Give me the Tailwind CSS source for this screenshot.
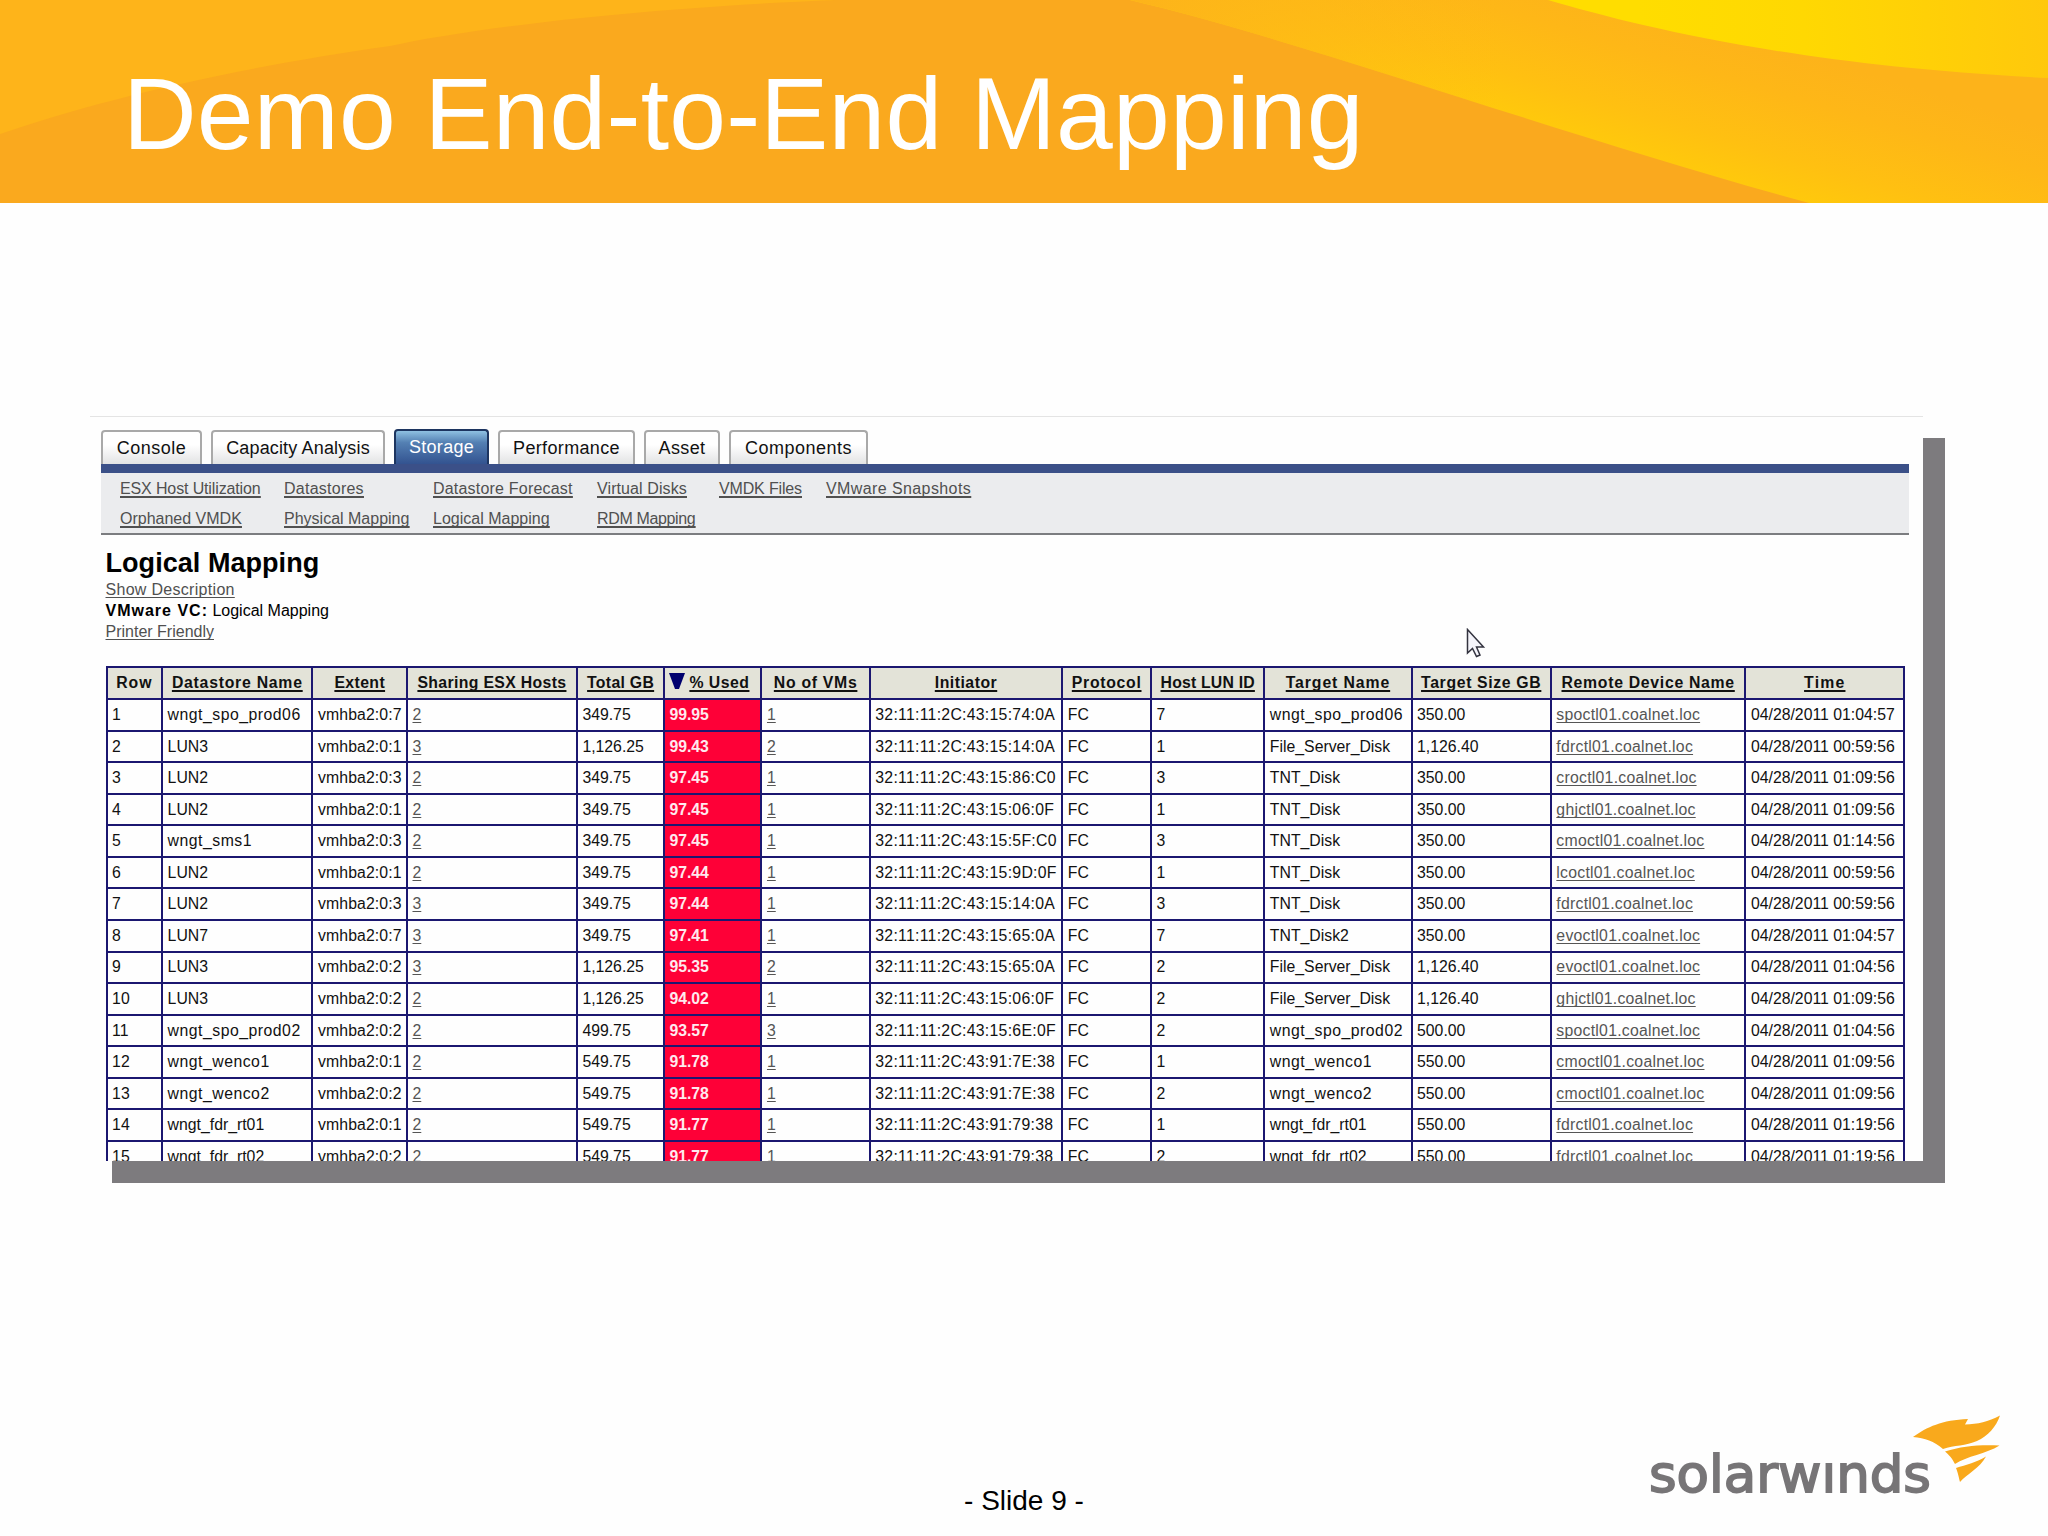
<!DOCTYPE html>
<html lang="en">
  <head>
    <meta charset="utf-8" />
    <meta name="viewport" content="width=device-width,initial-scale=1" />
    <title>Demo End-to-End Mapping</title>
    <script src="https://cdn.jsdelivr.net/npm/@tailwindcss/browser@4"></script>
  </head>

  <body class="w-[2048px] h-[1536px] overflow-hidden bg-[#fefefe] font-['Liberation_Sans',sans-serif] text-black">
    <!-- title banner -->
    <header class="relative h-[203px] overflow-hidden">
      <svg class="absolute inset-0" width="2048" height="203" viewBox="0 0 2048 203">
        <defs>
          <linearGradient id="band" x1="1500" y1="118" x2="1543" y2="-25" gradientUnits="userSpaceOnUse">
            <stop offset="0" stop-color="#ffca0b" />
            <stop offset="0.3" stop-color="#ffc011" />
            <stop offset="0.7" stop-color="#feb717" />
            <stop offset="1" stop-color="#fdb31a" />
          </linearGradient>
          <linearGradient id="fade" x1="1130" y1="0" x2="1500" y2="0" gradientUnits="userSpaceOnUse">
            <stop offset="0" stop-color="#fdb31b" />
            <stop offset="1" stop-color="#fdb31b" stop-opacity="0" />
          </linearGradient>
          <linearGradient id="sun" x1="1640" y1="30" x2="2048" y2="0" gradientUnits="userSpaceOnUse">
            <stop offset="0" stop-color="#ffdd00" />
            <stop offset="0.4" stop-color="#ffd802" />
            <stop offset="1" stop-color="#ffc80c" />
          </linearGradient>
        </defs>
        <rect width="2048" height="203" fill="#faa91e" />
        <path d="M0 0H836C640 8 480 27 390 46C220 70 90 103 0 134Z" fill="#feb41a" />
        <path d="M1130 0C1300 40 1560 135 1809 203H2048V0Z" fill="url(#band)" />
        <path d="M1130 0C1300 40 1560 135 1809 203H2048V0Z" fill="url(#fade)" />
        <path d="M1548 0C1640 27 1800 66 2048 78V0Z" fill="url(#sun)" />
      </svg>
      <h1 class="relative pl-[123px] pt-[56px] text-[102px] leading-[117px] tracking-[0.2px] text-white whitespace-nowrap">Demo End-to-End Mapping</h1>
    </header>

    <!-- report window -->
    <main class="relative ml-[90px] mt-[213px] w-[1833px] h-[745px] shadow-[22px_22px_0_#7d7b7e]">
      <div class="h-full overflow-hidden bg-[#fefefe] border-t border-[#e4e4e4] pl-[11px]">
        <nav class="flex items-end h-[47px] text-[18px] text-[#111]">
          <div class="flex items-center justify-center w-[101px] h-[34px] mr-[9px] border-2 border-b-0 border-[#a9a9a9] rounded-t-sm bg-linear-to-b from-white from-40% to-[#e2e3e4] tracking-[0.5px]">Console</div>
          <div class="flex items-center justify-center w-[174px] h-[34px] mr-[9px] border-2 border-b-0 border-[#a9a9a9] rounded-t-sm bg-linear-to-b from-white from-40% to-[#e2e3e4] tracking-[0.15px]">Capacity Analysis</div>
          <div class="flex items-center justify-center w-[95px] h-[35px] mr-[9px] border-2 border-b-0 border-[#1d3560] rounded-t-sm bg-linear-to-b from-[#8fc1e2] via-[#5480b3] via-35% to-[#335390] text-white tracking-[0.3px]">Storage</div>
          <div class="flex items-center justify-center w-[137px] h-[34px] mr-[9px] border-2 border-b-0 border-[#a9a9a9] rounded-t-sm bg-linear-to-b from-white from-40% to-[#e2e3e4] tracking-[0.35px]">Performance</div>
          <div class="flex items-center justify-center w-[76px] h-[34px] mr-[9px] border-2 border-b-0 border-[#a9a9a9] rounded-t-sm bg-linear-to-b from-white from-40% to-[#e2e3e4] tracking-[0.4px]">Asset</div>
          <div class="flex items-center justify-center w-[139px] h-[34px] border-2 border-b-0 border-[#a9a9a9] rounded-t-sm bg-linear-to-b from-white from-40% to-[#e2e3e4] tracking-[0.5px]">Components</div>
        </nav>

        <div class="w-[1808px] h-[71px] border-t-9 border-t-[#3b5088] border-b-2 border-b-[#7b7d80] bg-[#ebecee] pl-[19px] pt-[1px]">
          <div class="grid grid-cols-[164px_149px_164px_122px_107px_200px] auto-rows-[30px] items-center text-[16px] text-[#505050] underline underline-offset-2 decoration-2 [text-decoration-skip-ink:none]">
            <a class="tracking-[-0.13px]">ESX Host Utilization</a><a class="tracking-[0.25px]">Datastores</a><a class="tracking-[0.2px]">Datastore Forecast</a><a class="tracking-[0.1px]">Virtual Disks</a><a class="tracking-[-0.15px]">VMDK Files</a><a class="tracking-[0.4px]">VMware Snapshots</a>
            <a>Orphaned VMDK</a><a>Physical Mapping</a><a>Logical Mapping</a><a class="tracking-[-0.35px]">RDM Mapping</a>
          </div>
        </div>

        <div class="pl-[4.5px] pt-[13px] text-[16px] leading-[21px]">
          <h2 class="text-[27px] leading-[31px] tracking-[0.05px] font-bold">Logical Mapping</h2>
          <p><a class="text-[#505050] tracking-[0.3px] underline underline-offset-2 [text-decoration-skip-ink:none]">Show Description</a></p>
          <p><b class="tracking-[1px]">VMware VC:</b> Logical Mapping</p>
          <p><a class="text-[#505050] underline underline-offset-2 [text-decoration-skip-ink:none]">Printer Friendly</a></p>
        </div>

        <div id="report" class="grid grid-cols-[53.5px_148.4px_92.5px_167.9px_85.5px_95.1px_106.3px_190.5px_86.8px_111.3px_145.2px_137.3px_192.6px_156.7px] grid-rows-[30px] auto-rows-[29.57px] gap-[2px] p-[2px] w-[1799.6px] ml-[4.6px] mt-[24px] bg-[#1b1770] text-[15.8px] whitespace-nowrap"></div>
      </div>

      <!-- mouse pointer -->
      <svg class="absolute left-[1376px] top-[212px]" width="20" height="31" viewBox="0 0 20 31">
        <path d="M1.500 1.500V25L6.500 20.500L10.500 28.500L14 27L10.500 19H17.500Z" fill="#f4f4fa" stroke="#33333f" stroke-width="1.500" />
      </svg>
    </main>

    <footer class="relative h-[375px]">
      <p class="pt-[324px] text-center text-[28px] leading-[32px]">- Slide 9 -</p>
      <!-- solarwinds logo -->
      <svg class="absolute left-[1620px] top-[229px]" width="428" height="146" viewBox="0 0 428 146">
        <text x="29" y="102" textLength="282" lengthAdjust="spacingAndGlyphs" font-family="DejaVu Sans" font-size="52" fill="#777577" stroke="#777577" stroke-width="1.800">solarwınds</text>
        <g fill="#f9a91c">
          <path d="M293 47C307 37 322 30 348 29L345 34.500C358 34 368 32 380 25.500C376 37 368 46 357 51C346 56 334 55 323 59C314 51 305 48 293 47Z" />
          <path d="M325 61.500C342 56 360 54.500 379.500 55.500C366 64 347 66 335 74C332 68 329 65 325 61.500Z" />
          <path d="M336 78C346 75 357 72 366 66.500C360 78 347 84 340 92C338.500 86 338 83 336 78Z" />
        </g>
      </svg>
    </footer>

    <script>
      // [label, letter spacing]
      const headers = [
        ["Row", "tracking-[0.9px]"], ["Datastore Name", "tracking-[0.75px]"], ["Extent", "tracking-[0.4px]"], ["Sharing ESX Hosts", "tracking-[0.35px]"],
        ["Total GB", "tracking-[0.3px]"], ["% Used", "tracking-[0.5px]"], ["No of VMs", "tracking-[0.7px]"], ["Initiator", "tracking-[0.5px]"],
        ["Protocol", "tracking-[0.7px]"], ["Host LUN ID", "tracking-[0.2px]"], ["Target Name", "tracking-[0.9px]"], ["Target Size GB", "tracking-[0.65px]"],
        ["Remote Device Name", "tracking-[0.7px]"], ["Time", "tracking-[1.2px]"]
      ];
      const rows = [
        ["1", "wngt_spo_prod06", "vmhba2:0:7", "2", "349.75", "99.95", "1", "32:11:11:2C:43:15:74:0A", "FC", "7", "wngt_spo_prod06", "350.00", "spoctl01.coalnet.loc", "04/28/2011 01:04:57"],
        ["2", "LUN3", "vmhba2:0:1", "3", "1,126.25", "99.43", "2", "32:11:11:2C:43:15:14:0A", "FC", "1", "File_Server_Disk", "1,126.40", "fdrctl01.coalnet.loc", "04/28/2011 00:59:56"],
        ["3", "LUN2", "vmhba2:0:3", "2", "349.75", "97.45", "1", "32:11:11:2C:43:15:86:C0", "FC", "3", "TNT_Disk", "350.00", "croctl01.coalnet.loc", "04/28/2011 01:09:56"],
        ["4", "LUN2", "vmhba2:0:1", "2", "349.75", "97.45", "1", "32:11:11:2C:43:15:06:0F", "FC", "1", "TNT_Disk", "350.00", "ghjctl01.coalnet.loc", "04/28/2011 01:09:56"],
        ["5", "wngt_sms1", "vmhba2:0:3", "2", "349.75", "97.45", "1", "32:11:11:2C:43:15:5F:C0", "FC", "3", "TNT_Disk", "350.00", "cmoctl01.coalnet.loc", "04/28/2011 01:14:56"],
        ["6", "LUN2", "vmhba2:0:1", "2", "349.75", "97.44", "1", "32:11:11:2C:43:15:9D:0F", "FC", "1", "TNT_Disk", "350.00", "lcoctl01.coalnet.loc", "04/28/2011 00:59:56"],
        ["7", "LUN2", "vmhba2:0:3", "3", "349.75", "97.44", "1", "32:11:11:2C:43:15:14:0A", "FC", "3", "TNT_Disk", "350.00", "fdrctl01.coalnet.loc", "04/28/2011 00:59:56"],
        ["8", "LUN7", "vmhba2:0:7", "3", "349.75", "97.41", "1", "32:11:11:2C:43:15:65:0A", "FC", "7", "TNT_Disk2", "350.00", "evoctl01.coalnet.loc", "04/28/2011 01:04:57"],
        ["9", "LUN3", "vmhba2:0:2", "3", "1,126.25", "95.35", "2", "32:11:11:2C:43:15:65:0A", "FC", "2", "File_Server_Disk", "1,126.40", "evoctl01.coalnet.loc", "04/28/2011 01:04:56"],
        ["10", "LUN3", "vmhba2:0:2", "2", "1,126.25", "94.02", "1", "32:11:11:2C:43:15:06:0F", "FC", "2", "File_Server_Disk", "1,126.40", "ghjctl01.coalnet.loc", "04/28/2011 01:09:56"],
        ["11", "wngt_spo_prod02", "vmhba2:0:2", "2", "499.75", "93.57", "3", "32:11:11:2C:43:15:6E:0F", "FC", "2", "wngt_spo_prod02", "500.00", "spoctl01.coalnet.loc", "04/28/2011 01:04:56"],
        ["12", "wngt_wenco1", "vmhba2:0:1", "2", "549.75", "91.78", "1", "32:11:11:2C:43:91:7E:38", "FC", "1", "wngt_wenco1", "550.00", "cmoctl01.coalnet.loc", "04/28/2011 01:09:56"],
        ["13", "wngt_wenco2", "vmhba2:0:2", "2", "549.75", "91.78", "1", "32:11:11:2C:43:91:7E:38", "FC", "2", "wngt_wenco2", "550.00", "cmoctl01.coalnet.loc", "04/28/2011 01:09:56"],
        ["14", "wngt_fdr_rt01", "vmhba2:0:1", "2", "549.75", "91.77", "1", "32:11:11:2C:43:91:79:38", "FC", "1", "wngt_fdr_rt01", "550.00", "fdrctl01.coalnet.loc", "04/28/2011 01:19:56"],
        ["15", "wngt_fdr_rt02", "vmhba2:0:2", "2", "549.75", "91.77", "1", "32:11:11:2C:43:91:79:38", "FC", "2", "wngt_fdr_rt02", "550.00", "fdrctl01.coalnet.loc", "04/28/2011 01:19:56"]
      ];
      const linkCols = [3, 6, 12];
      const arrow = '<svg class="-ml-[7px] mr-[4px] mb-[5px]" width="16" height="16" viewBox="0 0 16 16"><path d="M0 0H16L10 16H6Z" fill="#00006e"/></svg>';

      function spacing(v, i) {
        if (/^wngt_[sw]/.test(v)) return "tracking-[0.5px]";
        if (i == 7) return "tracking-[0.28px]";
        if (i == 12) return "tracking-[0.25px]";
        if (i == 2) return "tracking-[0.1px]";
        return "";
      }

      let html = "";
      headers.forEach(([label, gap], i) => {
        const line = i ? "underline underline-offset-2 decoration-2 [text-decoration-skip-ink:none]" : "";
        html += `<div class="flex items-center justify-center bg-[#e3e3d8] font-bold text-[#111] ${gap}">${i == 5 ? arrow : ""}<span class="${line}">${label}</span></div>`;
      });
      rows.forEach(row => {
        row.forEach((v, i) => {
          if (i == 5) html += `<div class="flex items-center pl-[4px] bg-[#fe0037] font-bold text-[#ffe9ee]">${v}</div>`;
          else if (linkCols.includes(i)) html += `<div class="flex items-center pl-[4.5px] bg-[#fefefe] ${spacing(v, i)}"><a class="text-[#555] underline underline-offset-2 [text-decoration-skip-ink:none]">${v}</a></div>`;
          else html += `<div class="flex items-center pl-[4.5px] bg-[#fefefe] text-[#111] ${spacing(v, i)}">${v}</div>`;
        });
      });
      document.getElementById("report").innerHTML = html;
    </script>
  </body>
</html>
